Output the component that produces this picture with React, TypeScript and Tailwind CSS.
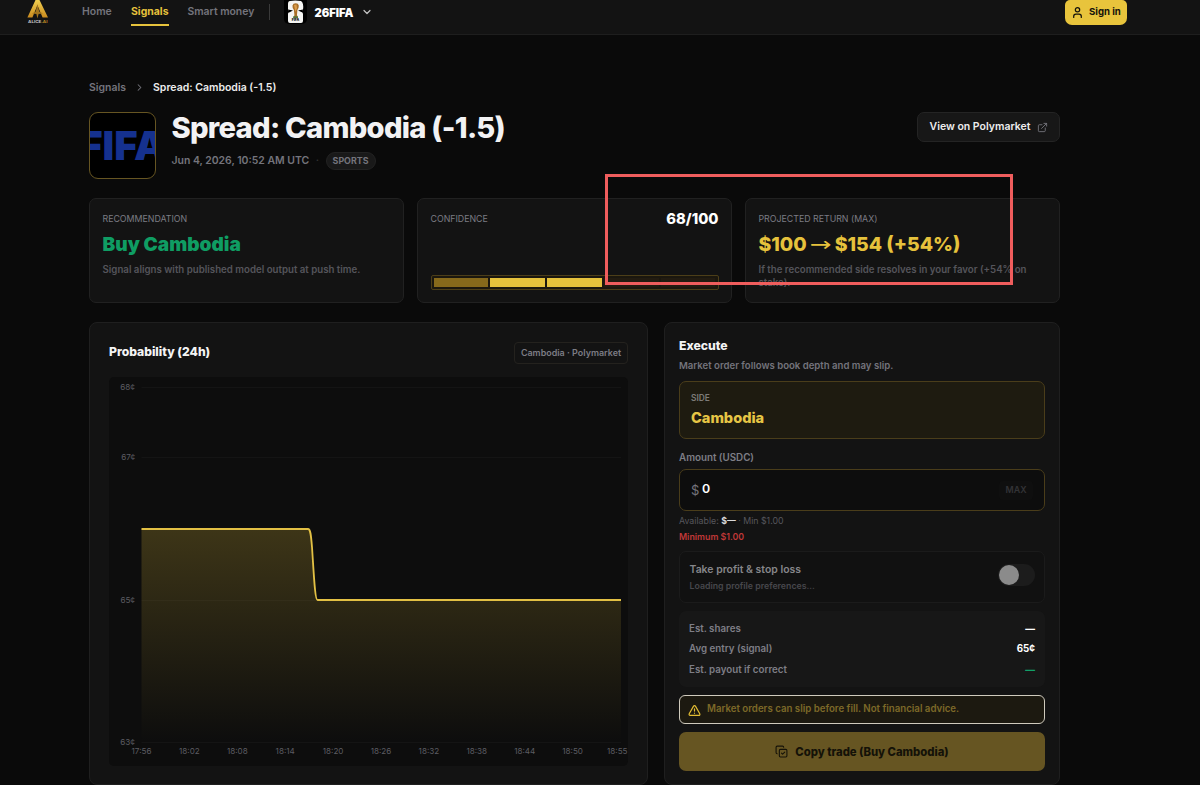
import { ChevronDown, ChevronRight, CopyCheck, ExternalLink, TriangleAlert, User } from "lucide-react";
import type { ReactNode } from "react";

const timeLabels = ["17:56", "18:02", "18:08", "18:14", "18:20", "18:26", "18:32", "18:38", "18:44", "18:50"];

function Header() {
  return (
    <header className="flex h-[35px] shrink-0 items-start border-b border-[#1e1e1e] bg-[#131313] pl-[26px]">
      <svg width="23" height="25" viewBox="0 0 23 25" className="shrink-0">
        <defs>
          <linearGradient id="gold" x1="0" y1="0" x2="0" y2="1">
            <stop offset="0" stopColor="#f0cf50" />
            <stop offset="1" stopColor="#c98a1e" />
          </linearGradient>
        </defs>
        <path d="M9.5 0H13.5L22 17.6H16.6L11.4 5.2L6.4 17.6H1.4Z" fill="url(#gold)" />
        <path d="M11.4 4L13.2 11.4L17 13.6L12.6 14L11.4 18.6L10.4 14L6 13.6L9.7 11.4Z" fill="#a2741c" />
        <text x="2" y="23" fontSize="4.1" fontWeight="700" textLength="19.5" lengthAdjust="spacingAndGlyphs" fill="#c4c4c4">
          ALICE<tspan fill="#c08e26">.AI</tspan>
        </text>
      </svg>
      <nav className="ml-[33px] flex text-[10.45px] leading-[14px] font-semibold text-[#74747c]">
        <span className="w-[49px] pt-[5px]">Home</span>
        <span className="mr-[19px] h-[26px] border-b-2 border-[#e6c23c] pt-[5px] font-bold text-[#e6c23c]">Signals</span>
        <span className="w-[81px] pt-[5px] text-[10.4px]">Smart money</span>
      </nav>
      <div className="mt-[4px] h-[16px] w-px bg-[#3a3a3a]" />
      <div className="ml-[14px] h-[24px] w-[23px] overflow-hidden rounded-b-[5px] bg-black">
        <svg width="23" height="24" viewBox="0 0 23 24">
          <path d="M6 1Q11 0 17 1Q20 3 19 10Q19 11 17 11.5Q19 12 19 14V21Q19 23 17 23H6Q4 23 4 21V14Q4 12 7 11.5Q4 11 4 9V4Q4 1 6 1Z" fill="#f5f5f3" />
          <path d="M4 9.5L9 10.5L5 12.6ZM19 9.5L14 10.5L18.5 12.6Z" fill="#000" />
          <path d="M8.5 5.4Q9 3.2 11.7 3.2Q14.4 3.2 14.8 5.6Q15 8 13.4 10L13 15L14 18.3H9.4L10.4 15L9.9 10Q8.2 8 8.5 5.4Z" fill="#a96f28" />
          <path d="M10 5L12.5 4.5L13 8L11.5 12Z" fill="#db9c4a" />
          <path d="M9.2 16.2H14V18H9.2Z" fill="#55733d" />
          <text x="7.8" y="21.4" fontSize="3.4" fontWeight="900" textLength="7.5" lengthAdjust="spacingAndGlyphs" fill="#111">FIFA</text>
        </svg>
      </div>
      <span className="ml-[8px] w-[46px] pt-[5px] text-[11.2px] leading-[16px] font-black text-white">26FIFA</span>
      <ChevronDown size={12} strokeWidth={2.4} className="mt-[6px] text-[#c5c5c5]" />
      <button className="mr-[73px] ml-auto flex h-[25px] w-[62px] items-center gap-[5px] rounded-t-[5px] rounded-b-[7px] bg-[#e8c43c] pb-[1px] pl-[6px] text-[9.65px] font-bold whitespace-nowrap text-[#15130b]">
        <User size={13} strokeWidth={2.3} />
        Sign in
      </button>
    </header>
  );
}

function StatCard({ children }: { children: ReactNode }) {
  return <section className="h-[105px] flex-1 rounded-[7px] border border-[#212121] bg-[#131313] px-[12.5px] pt-[13px]">{children}</section>;
}

function CardLabel({ children }: { children: ReactNode }) {
  return <div className="text-[8.8px] leading-[13px] text-[#7c7c84]">{children}</div>;
}

function Chart() {
  return (
    <svg width="519" height="389" viewBox="0 0 519 389" className="mt-[14px] block">
      <defs>
        <linearGradient id="area" gradientUnits="userSpaceOnUse" x1="0" y1="152" x2="0" y2="365">
          <stop offset="0" stopColor="#e8c43c" stopOpacity="0.22" />
          <stop offset="1" stopColor="#e8c43c" stopOpacity="0" />
        </linearGradient>
      </defs>
      <rect width="519" height="389" rx="5" fill="#0d0d0d" />
      <path d="M32.5 10.5H512M32.5 80.5H512M32.5 223.5H512M32.5 365.5H512" stroke="#141414" />
      <path d="M32.5 152H199.5C202 152 202 158 203 170C205 200 206 223 208.5 223H512V365H32.5Z" fill="url(#area)" />
      <path d="M32.5 152H199C201.5 152 202 158 203 170C205 200 206 223 208.5 223H512" fill="none" stroke="#e2c044" strokeWidth="1.8" />
      <g fontSize="8.1" fill="#5c5c62" textAnchor="end">
        <text x="26" y="13">68¢</text>
        <text x="26" y="83">67¢</text>
        <text x="26" y="226">65¢</text>
        <text x="26" y="368">63¢</text>
        <text x="518.5" y="377">18:55</text>
      </g>
      <g fontSize="8.1" fill="#5c5c62" textAnchor="middle">
        {timeLabels.map((label, i) => (
          <text key={label} x={32.5 + i * 47.9} y="377">{label}</text>
        ))}
      </g>
    </svg>
  );
}

function ProbabilityPanel() {
  return (
    <section className="h-[463px] w-[559px] rounded-[8px] border border-[#1f1f1f] bg-[#131313] px-[19px] pt-[19px]">
      <div className="flex h-[21px] items-center justify-between">
        <h2 className="text-[12.15px] font-extrabold text-[#f4f4f4]">Probability (24h)</h2>
        <span className="flex h-[22px] w-[114px] items-center justify-center rounded-[4px] border border-[#24221e] text-[8.95px] font-semibold whitespace-nowrap text-[#7c7c84]">
          Cambodia · Polymarket
        </span>
      </div>
      <Chart />
    </section>
  );
}

function ExecutePanel() {
  return (
    <section className="flex h-[463px] w-[396px] flex-col rounded-[8px] border border-[#1f1f1f] bg-[#131313] px-[14px] pt-[15px]">
      <h2 className="text-[12.2px] leading-[16px] font-extrabold text-[#f4f4f4]">Execute</h2>
      <p className="mt-[5px] text-[9.6px] leading-[14px] font-semibold text-[#74747c]">Market order follows book depth and may slip.</p>
      <div className="mt-[8px] h-[58px] shrink-0 rounded-[7px] border border-[#4a3d1a] bg-[#1e1b10] px-[11px] pt-[10px]">
        <div className="text-[8.4px] leading-[12px] font-semibold text-[#7d7b78]">SIDE</div>
        <div className="mt-[5px] text-[14.55px] leading-[18px] font-extrabold text-[#e6c545]">Cambodia</div>
      </div>
      <div className="mt-[12px] text-[9.8px] leading-[14px] font-semibold text-[#7e7e86]">Amount (USDC)</div>
      <div className="mt-[4px] flex h-[42px] shrink-0 items-center rounded-[7px] border border-[#4a3d1a] bg-[#0d0d0d] px-[11px]">
        <span className="w-[11px] pt-[1px] text-[13px] text-[#74747c]">$</span>
        <span className="pb-px text-[12.4px] font-semibold text-white">0</span>
        <span className="ml-auto flex h-[19px] w-[34px] items-center justify-center rounded-[4px] bg-[#0f0f0f] text-[8.9px] font-semibold text-[#333336]">MAX</span>
      </div>
      <div className="mt-[4px] text-[8.8px] leading-[12px] text-[#56565c]">
        Available: <span className="font-bold text-[#dadada]">$—</span> · Min $1.00
      </div>
      <div className="mt-[4px] text-[8.8px] leading-[12px] font-semibold text-[#c03838]">Minimum $1.00</div>
      <div className="mt-[8px] flex h-[52px] shrink-0 items-center justify-between rounded-[7px] border border-[#1b1b1b] bg-[#111111] px-[9.5px]">
        <div>
          <div className="text-[10.45px] leading-[15px] font-semibold text-[#86868a]">Take profit &amp; stop loss</div>
          <div className="mt-[2px] text-[8.78px] leading-[13px] font-semibold text-[#47474c]">Loading profile preferences...</div>
        </div>
        <div className="mb-[5px] flex h-[22px] w-[37px] items-center rounded-full bg-[#1c1c1c] pl-[1px]">
          <div className="size-[20px] rounded-full bg-[#8b8b8b]" />
        </div>
      </div>
      <dl className="mt-[8px] h-[76px] shrink-0 rounded-[7px] bg-[#171717] px-[10px] pt-[6.5px] text-[9.75px] leading-[21px] font-semibold text-[#7e7e86]">
        <div className="flex h-[20.8px] justify-between"><dt>Est. shares</dt><dd className="font-bold text-white">—</dd></div>
        <div className="flex h-[20.8px] justify-between"><dt>Avg entry (signal)</dt><dd className="font-bold text-white">65¢</dd></div>
        <div className="flex h-[20.8px] justify-between"><dt>Est. payout if correct</dt><dd className="font-extrabold text-[#12a068]">—</dd></div>
      </dl>
      <div className="mt-[8px] flex h-[29px] shrink-0 rounded-[6px] border border-[#cfcabd] bg-[#1c1910] pl-[8px]">
        <TriangleAlert size={13} strokeWidth={2.2} className="mt-[8px] text-[#e3bd33]" />
        <span className="ml-[6px] pt-[6px] text-[9.69px] leading-[14px] font-semibold text-[#7c6928]">Market orders can slip before fill. Not financial advice.</span>
      </div>
      <button className="mt-[8px] flex h-[39px] shrink-0 items-center justify-center gap-[7px] rounded-[7px] bg-[#665522] pt-[1px] text-[11.3px] font-extrabold text-[#141208]">
        <CopyCheck size={13} strokeWidth={2} className="-mt-[2px]" />
        Copy trade (Buy Cambodia)
      </button>
    </section>
  );
}

export default function App() {
  return (
    <div className="relative flex h-[785px] w-[1200px] flex-col overflow-hidden bg-[#0a0a0a] font-['Inter',sans-serif]">
      <Header />
      <main className="ml-[89px] w-[971px] pt-[45px]">
        <div className="flex h-[15px] items-center text-[10.45px] font-semibold text-[#74747c]">
          <span className="w-[45px]">Signals</span>
          <ChevronRight size={11} strokeWidth={2.2} />
          <span className="ml-[8px] text-[10.5px] text-[#ededed]">Spread: Cambodia (-1.5)</span>
        </div>

        <div className="mt-[17px] flex">
          <div className="flex size-[67px] shrink-0 items-center justify-center overflow-hidden rounded-[9px] border border-[#665522] bg-black text-[40px] leading-none font-black text-[#15318f]">
            FIFA
          </div>
          <div className="ml-[15.5px]">
            <h1 className="-mt-px text-[29.15px] leading-[34px] font-extrabold tracking-[-0.025em] text-[#f2f2f4]">Spread: Cambodia (-1.5)</h1>
            <div className="mt-[7px] flex h-[18px] items-center text-[10.43px] font-semibold text-[#74747c]">
              Jun 4, 2026, 10:52 AM UTC
              <span className="mx-[6.5px] text-[#333]">·</span>
              <span className="flex h-[18px] w-[50px] items-center justify-center rounded-full border border-[#222] bg-[#191919] text-[8.85px] font-bold">SPORTS</span>
            </div>
          </div>
          <button className="ml-auto flex h-[30px] w-[143px] items-center gap-[7px] rounded-[7px] border border-[#242424] bg-[#171717] pl-[11.5px] text-[10.5px] font-semibold whitespace-nowrap text-[#ededed]">
            View on Polymarket
            <ExternalLink size={11} strokeWidth={2} className="mt-px text-[#74747c]" />
          </button>
        </div>

        <div className="mt-[19px] flex gap-[13px]">
          <StatCard>
            <CardLabel>RECOMMENDATION</CardLabel>
            <div className="mt-[6px] text-[19.1px] leading-[26px] font-black text-[#0f9d63]">Buy Cambodia</div>
            <p className="mt-[6px] text-[9.7px] leading-[13px] font-semibold text-[#55555b]">Signal aligns with published model output at push time.</p>
          </StatCard>
          <StatCard>
            <div className="flex h-[13px] items-center justify-between">
              <CardLabel>CONFIDENCE</CardLabel>
              <span className="pt-[2px] text-[14.7px] font-extrabold text-white">68/100</span>
            </div>
            <div className="mt-[50px] flex h-[15px] gap-[2px] rounded-[2px] border border-[#4c3e18] bg-[#1b170e] p-[2px]">
              <div className="flex-1 bg-[#86691b]" />
              <div className="flex-1 bg-[#e6c23c]" />
              <div className="flex-1 bg-[#e6c23c]" />
              <div className="flex-1 bg-[#221b10]" />
              <div className="flex-1 bg-[#221b10]" />
            </div>
          </StatCard>
          <StatCard>
            <CardLabel>PROJECTED RETURN (MAX)</CardLabel>
            <div className="mt-[6px] flex text-[19.4px] leading-[26px] font-extrabold whitespace-nowrap text-[#e6c23c]">
              $100
              <span className="mx-[3px] flex w-[22px] scale-y-75 justify-center font-['DejaVu_Sans'] text-[26px] font-normal">→</span>
              $154 (+54%)
            </div>
            <p className="mt-[6px] text-[9.66px] leading-[13px] font-semibold text-[#55555b]">If the recommended side resolves in your favor (+54% on stake).</p>
          </StatCard>
        </div>

        <div className="mt-[19px] flex gap-[16px]">
          <ProbabilityPanel />
          <ExecutePanel />
        </div>
      </main>
      <div className="pointer-events-none absolute top-[174px] left-[605px] h-[111px] w-[408px] border-3 border-[#ef5d5d]" />
    </div>
  );
}
